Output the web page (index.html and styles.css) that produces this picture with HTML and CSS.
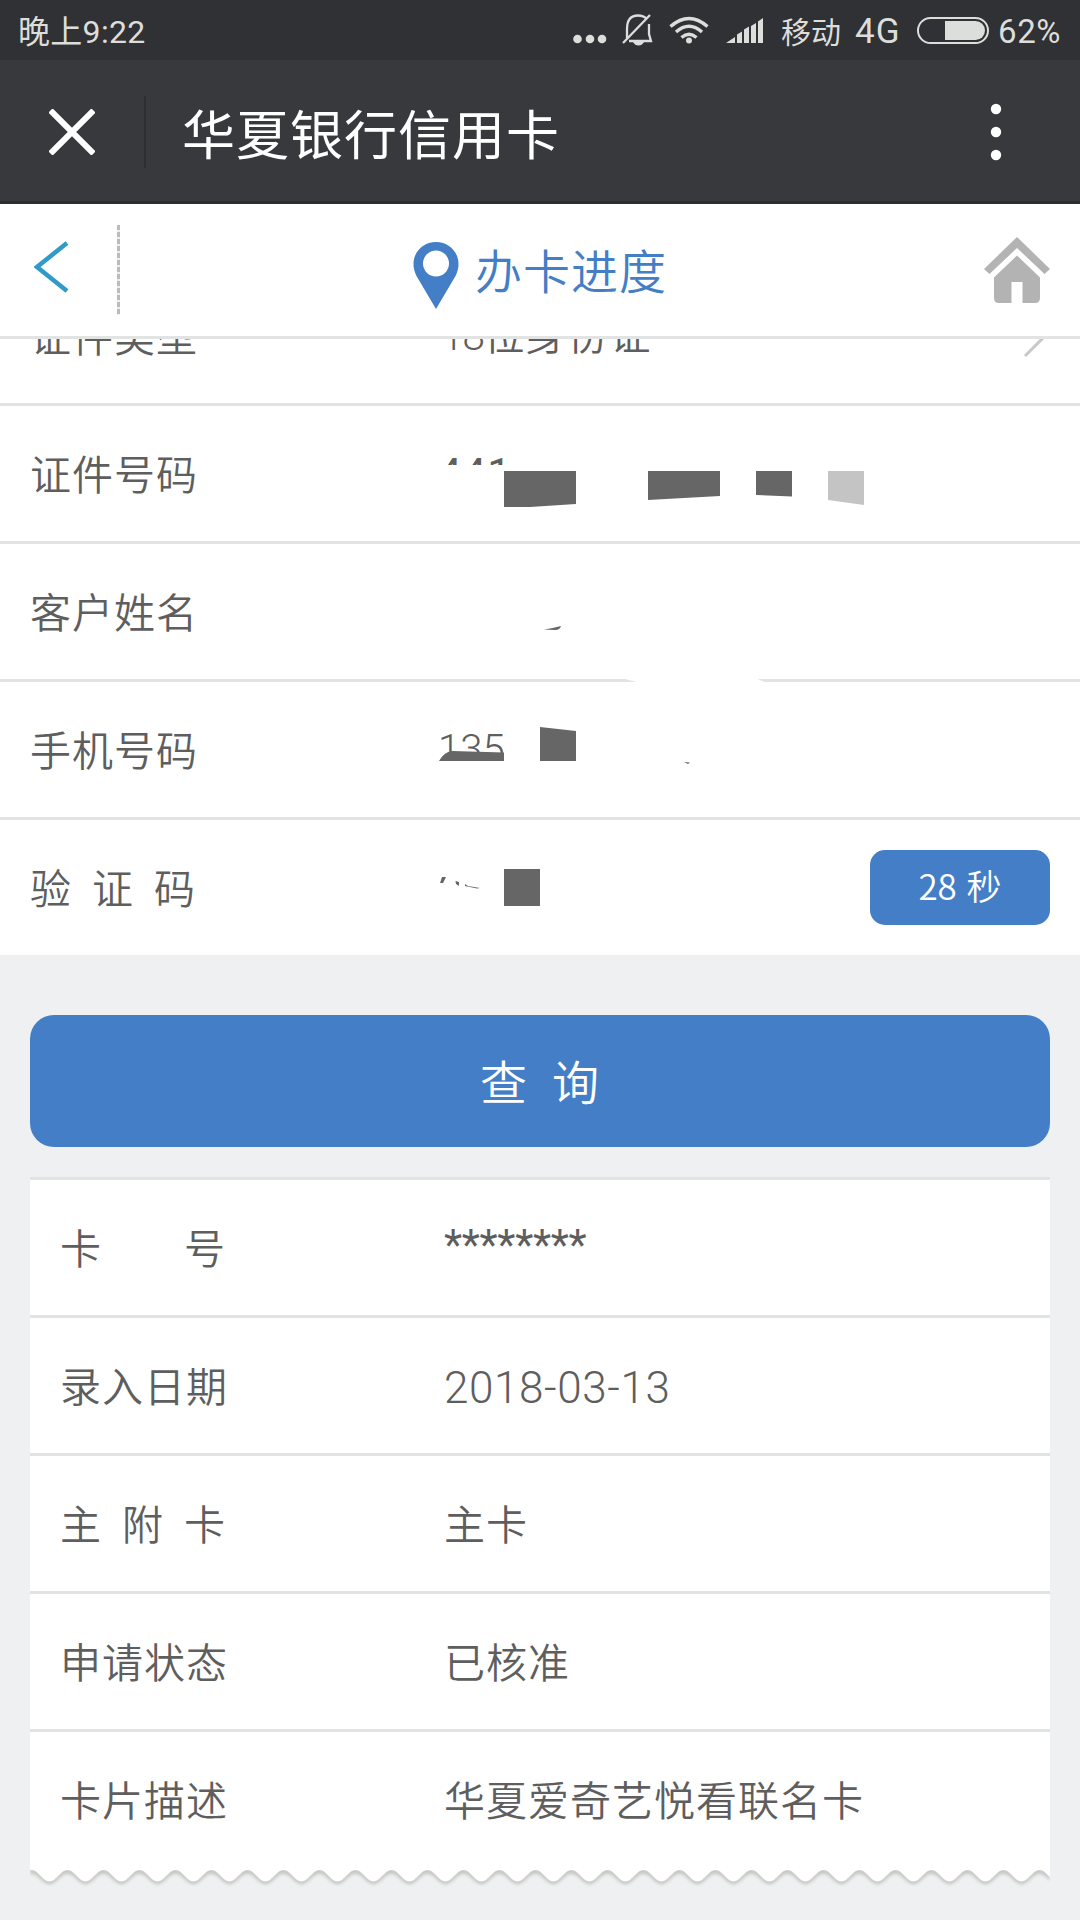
FILE: index.html
```html
<!DOCTYPE html>
<html lang="zh-CN">
<head>
<meta charset="utf-8">
<title>华夏银行信用卡</title>
<link rel="stylesheet" href="styles.css">
</head>
<body>
<div class="statusbar">
  <span class="clock">晚上9:22</span>
  <svg class="status-icons" width="192" height="60" viewBox="573 0 192 60" fill="#dcdedb">
    <circle cx="577.5" cy="39" r="4.300"/><circle cx="590" cy="39" r="4.300"/><circle cx="602" cy="39" r="4.300"/>
    <path d="M627 38V29C627 20 631 15.500 638 15.500C642 15.500 645 17 647 19M649 24V34L651 41H629M623 43L650 15" fill="none" stroke="#dcdedb" stroke-width="2.300"/>
    <path d="M633 42h11q-2 3.500-5.500 3.500t-5.500-3.500z"/>
    <g fill="none" stroke="#dcdedb" stroke-width="3.400"><path d="M670.500 26.500Q689 10.500 707.500 26.500"/><path d="M676 32Q689 20.500 702 32"/><path d="M681.500 37.500Q689 31 696.500 37.500"/></g>
    <circle cx="689" cy="40.500" r="3"/>
    <path d="M726 43L735 37V43zM737 43V34.500L742 31.500V43zM744 43V29.500L749 26.500V43zM751 43V26L756 23V43zM758 43V21.500L763 18V43z"/>
  </svg>
  <span class="carrier">移动</span>
  <span class="network">4G</span>
  <span class="battery"><i class="charge"></i></span>
  <span class="percent">62%</span>
</div>

<div class="titlebar">
  <svg class="close" width="46" height="46" viewBox="0 0 46 46"><path d="M1.500 1.500L44.500 44.500M44.500 1.500L1.500 44.500" stroke="#fff" stroke-width="6"/></svg>
  <span class="title-rule"></span>
  <h1 class="app-title">华夏银行信用卡</h1>
  <svg class="more" width="12" height="60" viewBox="0 0 12 60" fill="#fff"><circle cx="6" cy="7" r="5.200"/><circle cx="6" cy="30" r="5.200"/><circle cx="6" cy="53" r="5.200"/></svg>
</div>

<div class="pagehead">
  <svg class="back" width="36" height="52" viewBox="0 0 36 52"><path d="M33 2L3 26L33 50" fill="none" stroke="#309bc8" stroke-width="4.500"/></svg>
  <span class="dashed"></span>
  <div class="page-title">
    <svg width="46" height="68" viewBox="0 0 46 68"><path fill-rule="evenodd" fill="#437ec6" d="M23 1C10 1 .500 11 .500 23C.500 27 1.500 31 3.500 35L23 68L42.500 35C44.500 31 45.500 27 45.500 23C45.500 11 36 1 23 1zM23 9.500a13 13 0 1 1 0 26a13 13 0 1 1 0-26z"/></svg>
    <h2>办卡进度</h2>
  </div>
  <svg class="home" width="66" height="66" viewBox="0 0 66 66" fill="#b3b3b3"><path d="M33 0L66 32L60.500 37L33 11L5.500 37L0 32z"/><path d="M33 18.500L56 40.500V61Q56 66 51 66H38.500V45H27.500V66H15Q10 66 10 61V40.500z"/></svg>
</div>

<div class="form">
  <div class="row row-cut"><span class="label">证件类型</span><span class="value id-type"><span class="count">18</span>位身份证</span>
    <svg class="chevron" width="24" height="44" viewBox="0 0 24 44"><path d="M2 2L22 22L2 42" fill="none" stroke="#c8c8c8" stroke-width="3"/></svg></div>
  <div class="row"><span class="label">证件号码</span><span class="value id-digits">441</span></div>
  <div class="row"><span class="label">客户姓名</span></div>
  <div class="row"><span class="label">手机号码</span><span class="value phone-digits">135</span></div>
  <div class="row row-last"><span class="label spaced3">验证码</span><button class="countdown">28 秒</button></div>
  <svg class="redaction" width="1080" height="616" viewBox="0 339 1080 616">
    <g fill="#fff"><path d="M436 465H504V505H436zM438 760H506V785H438zM622 678L640 683H767L755 678z"/></g>
    <g fill="#666">
      <path d="M504 471H576V504L530 507H504zM648 471H720V496L648 500zM756 471H792V496.500L756 495z"/>
      <path d="M544 629.500Q553 628 561 626Q560 630 555 630z"/>
      <path d="M439 761Q444 752 452 751L504 752.500V761zM540 727L576 731V761H540z"/>
      <path d="M684 762L690 762.500L688 764z"/>
      <path d="M504 869H540V906H504zM440 883L442 877L446 877L443 883zM455.500 881L459 882V886L456 884zM465 884L468 886L480 888L477 888.500L465 886z"/>
    </g>
    <path fill="#c4c4c4" d="M828 471H864V505L828 500z"/>
  </svg>
</div>

<button class="query">查询</button>

<div class="result">
  <div class="row"><span class="label spaced2">卡号</span><span class="value stars">********</span></div>
  <div class="row"><span class="label">录入日期</span><span class="value date">2018-03-13</span></div>
  <div class="row"><span class="label spaced3">主附卡</span><span class="value">主卡</span></div>
  <div class="row"><span class="label">申请状态</span><span class="value">已核准</span></div>
  <div class="row"><span class="label">卡片描述</span><span class="value">华夏爱奇艺悦看联名卡</span></div>
</div>
<svg class="wave" width="1020" height="24" viewBox="0 0 1020 24">
  <defs>
    <pattern id="scallop" x="1.500" width="36" height="24" patternUnits="userSpaceOnUse"><path d="M0 2C7 2 11 13.500 18 13.500S29 2 36 2V0H0z" fill="#fff"/></pattern>
    <pattern id="shade" x="1.500" width="36" height="24" patternUnits="userSpaceOnUse"><path d="M0 6C7 6 11 16.500 18 16.500S29 6 36 6V0H0z" fill="#c8c9c6"/></pattern>
    <filter id="soft"><feGaussianBlur stdDeviation="1.600"/></filter>
  </defs>
  <rect width="1020" height="24" fill="url(#shade)" filter="url(#soft)"/>
  <rect width="1020" height="24" fill="url(#scallop)"/>
</svg>
</body>
</html>
```
FILE: styles.css
```css
* { box-sizing: border-box; }
body {
  margin: 0;
  width: 1080px;
  height: 1920px;
  overflow: hidden;
  background: #eef0f2;
  color: #5e5e5e;
  font-family: "Noto Sans CJK SC", sans-serif;
  font-weight: 350;
  font-size: 41px;
  line-height: 60px;
}
h1, h2 { margin: 0; font-weight: 350; }
svg { display: block; flex: none; }
button { border: 0; padding: 0; color: #fff; background: #437ec6; font: inherit; }

.statusbar {
  display: flex;
  align-items: center;
  height: 60px;
  padding-left: 18px;
  background: #303135;
  color: #dcdedb;
  font-size: 30px;
  font-weight: 400;
  white-space: nowrap;
}
.clock { width: 555px; padding-top: 3px; font-family: Roboto, "Noto Sans CJK SC", sans-serif; font-size: 32px; letter-spacing: .3px; }
.carrier { width: 74px; margin-left: 16px; }
.network { width: 62px; padding-top: 3px; font-family: Roboto, sans-serif; font-size: 35px; letter-spacing: 1px; }
.battery {
  display: flex;
  justify-content: flex-end;
  width: 72px;
  height: 27px;
  padding: 2px;
  border: 2px solid #dcdedb;
  border-radius: 14px;
}
.charge { width: 40px; background: #dcdedb; border-radius: 0 10px 10px 0; }
.percent { margin-left: 9px; padding-top: 3px; font-family: Roboto, sans-serif; font-size: 33px; letter-spacing: .6px; }

.titlebar {
  display: flex;
  align-items: center;
  height: 144px;
  padding: 2px 78px 0 49px;
  background: #38393d;
  border-bottom: 3px solid #2b2d2f;
}
.title-rule { width: 2px; height: 72px; margin: 0 36px 0 49px; background: #2d2e32; }
.app-title { flex: 1; color: #fff; font-size: 53px; font-weight: 400; letter-spacing: 1px; }

.pagehead {
  display: flex;
  align-items: center;
  height: 135px;
  padding: 0 30px 0 34px;
  background: #fff;
  border-bottom: 3px solid #e2e4e4;
}
.back { margin-bottom: 6px; }
.dashed {
  width: 3px;
  height: 90px;
  margin-left: 47px;
  background: repeating-linear-gradient(#bbb 0 5px, #eee 5px 7px);
}
.page-title { flex: 1; display: flex; align-items: center; gap: 16px; padding: 10px 0 0 293px; }
.page-title h2 { padding-bottom: 12px; color: #437ec6; font-size: 47px; letter-spacing: 1px; }

.form { position: relative; height: 616px; overflow: hidden; background: #fff; }
.row {
  display: flex;
  align-items: center;
  height: 138px;
  border-bottom: 3px solid #e2e4e4;
}
.label, .value { padding-bottom: 3px; letter-spacing: 1px; }
.form .row { padding: 0 30px; }
.row-cut { margin-top: -71px; }
.form .row-last { height: 135px; border-bottom: 0; }
.form .label { width: 414px; }
.id-type { margin-left: -3px; }
.count { font-family: Roboto, sans-serif; font-weight: 300; letter-spacing: -1.5px; }
.chevron { margin-left: auto; margin-right: 3px; }
.label.spaced3 { letter-spacing: 21px; }
.label.spaced2 { letter-spacing: 83px; }
.id-digits, .phone-digits, .date, .stars { font-family: Roboto, sans-serif; font-weight: 300; }
.id-digits { width: 66px; margin-left: -6px; overflow: hidden; font-size: 42px; font-weight: 400; padding-bottom: 0; }
.phone-digits { width: 66px; margin-left: -6px; overflow: hidden; font-size: 40px; letter-spacing: 0; padding-bottom: 0; }
.countdown { width: 180px; height: 75px; margin-left: auto; padding-bottom: 6px; border-radius: 15px; font-size: 35px; line-height: 66px; word-spacing: 2px; }
.redaction { position: absolute; left: 0; top: 0; }

.query {
  display: block;
  width: 1020px;
  height: 132px;
  margin: 60px auto 30px;
  padding: 0 0 3px 24px;
  border-radius: 24px;
  font-size: 47px;
  letter-spacing: 25px;
}
.result { width: 1020px; margin: 0 auto; border-top: 3px solid #e2e4e4; background: #fff; }
.result .row { padding: 0 30px; }
.result .row:last-child { height: 136px; padding-bottom: 1px; border-bottom: 0; }
.result .label { width: 384px; }
.stars { padding-bottom: 5px; font-size: 42px; font-weight: 400; letter-spacing: -.3px; }
.date { padding: 5px 0 0; font-size: 44px; letter-spacing: .6px; }
.wave { margin: 0 auto; }
```
